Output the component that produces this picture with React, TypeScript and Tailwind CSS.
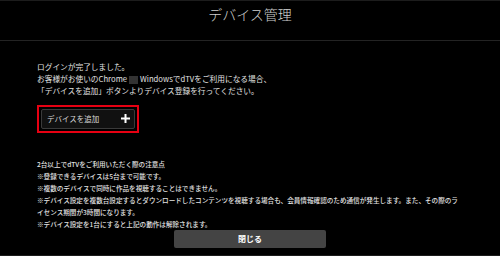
import React from "react";

const notes = [
  "2台以上でdTVをご利用いただく際の注意点",
  "※登録できるデバイスは5台まで可能です。",
  "※複数のデバイスで同時に作品を視聴することはできません。",
  "※デバイス設定を複数台設定するとダウンロードしたコンテンツを視聴する場合も、会員情報確認のため通信が発生します。また、その際のライセンス期間が3時間になります。",
  "※デバイス設定を1台にすると上記の動作は解除されます。",
];

const App = () => {
  return (
    <div
      className="w-[500px] h-[256px] bg-black flex flex-col border-t border-b border-[#1c1c1c] overflow-hidden"
      style={{ fontFamily: '"Noto Sans CJK JP", "Noto Sans", sans-serif' }}
    >
      <header className="h-[40px] shrink-0 border-b border-[#232323] flex justify-center pt-[4px]">
        <h1 className="text-[14px] leading-[19px] font-light text-[#d0d0d0]">デバイス管理</h1>
      </header>

      <div className="px-[37px] pt-[20px] flex flex-col">
        <div className="text-[7.7px] leading-[12.2px] text-[#e2e2e2]">
          <p>ログインが完了しました。</p>
          <p>
            お客様がお使いのChrome
            <span className="inline-block w-[9px] h-[8px] bg-[#333] mx-[2px] align-middle" />
            WindowsでdTVをご利用になる場合、
          </p>
          <p>「デバイスを追加」ボタンよりデバイス登録を行ってください。</p>
        </div>

        <div className="mt-[7px] w-[102px] border-2 border-[#e60012] p-[2px]">
          <button className="w-full h-[20px] bg-[#111] border border-[#3a3a3a] rounded-[2px] flex items-center justify-between pl-[5px] pr-[3px]">
            <span className="text-[7.5px] text-[#d8d8d8]">デバイスを追加</span>
            <svg width="11" height="11" viewBox="0 0 11 11">
              <path d="M5.5 1v9M1 5.5h9" stroke="#fff" strokeWidth="2" />
            </svg>
          </button>
        </div>

        <div className="mt-[25px] w-[426px] text-[6.6px] leading-[12px] font-medium text-[#e2e2e2]">
          {notes.map((n) => (
            <p key={n}>{n}</p>
          ))}
        </div>

        <div className="flex justify-center">
          <button className="w-[152px] h-[18px] bg-[#444] rounded-[2px] text-[8px] font-bold text-white">
            閉じる
          </button>
        </div>
      </div>
    </div>
  );
};

export default App;
